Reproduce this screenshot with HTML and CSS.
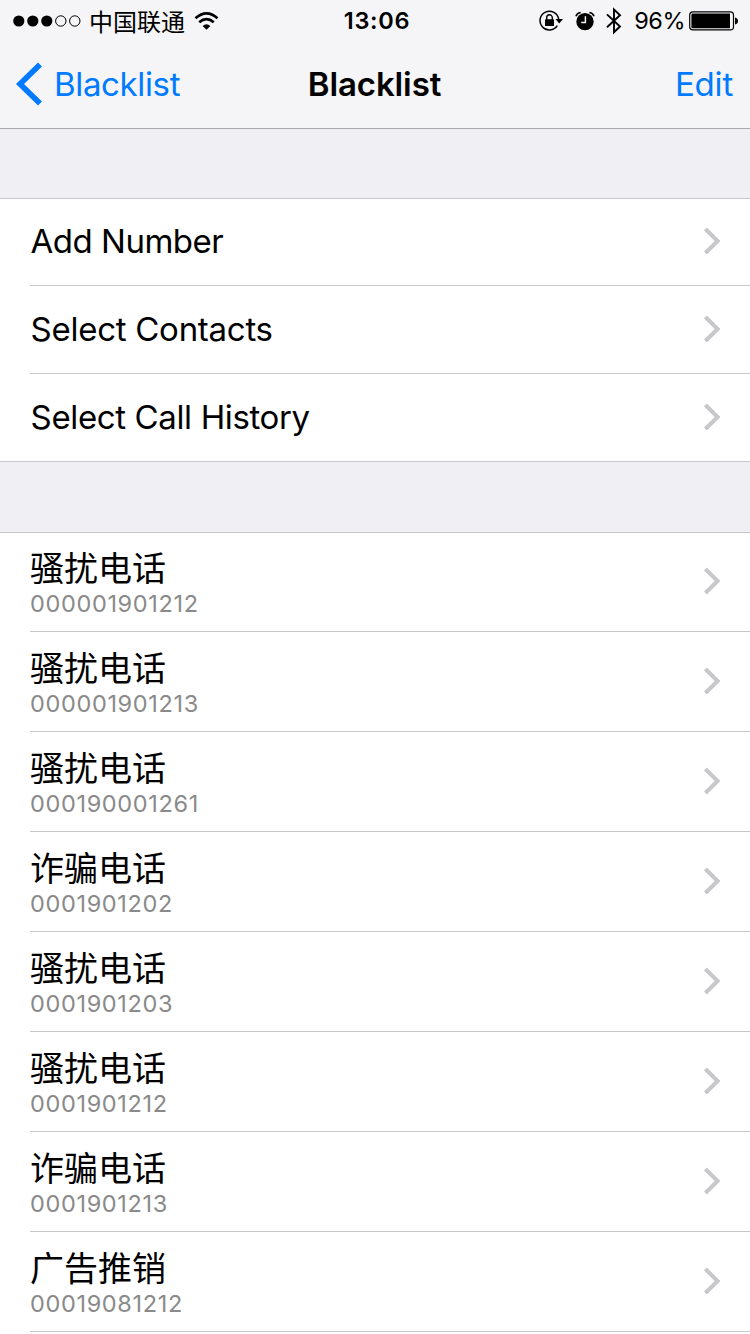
FILE: index.html
```html
<!DOCTYPE html>
<html lang="en">
<head>
<meta charset="utf-8">
<title>Blacklist</title>
<link rel="stylesheet" href="styles.css">
</head>
<body>
<svg class="defs" width="0" height="0" aria-hidden="true">
  <symbol id="chevron" viewBox="0 0 18 28"><path d="M2.4 2 14.6 14 2.4 26" fill="none" stroke="#c7c7cc" stroke-width="4"/></symbol>
</svg>
<header class="topbar">
  <div class="status">
    <div class="status-left">
      <svg class="signal" width="68" height="12" viewBox="0 0 68 12">
        <circle cx="5.8" cy="6" r="5.6"/><circle cx="19.8" cy="6" r="5.6"/><circle cx="33.8" cy="6" r="5.6"/>
        <circle cx="47.8" cy="6" r="5.2" fill="none" stroke="#000"/><circle cx="61.8" cy="6" r="5.2" fill="none" stroke="#000"/>
      </svg>
      <span class="carrier">中国联通</span>
      <svg class="wifi" width="25" height="18" viewBox="0 0 26 19" fill="none" stroke="#000" stroke-width="2.8">
        <path d="M1.4 6.7Q13-3.7 24.6 6.7"/><path d="M5.3 10.8Q13 4.2 20.7 10.8"/>
        <path d="M8.9 14.7Q13 11 17.1 14.7L13 18.7Z" fill="#000" stroke="none"/>
      </svg>
    </div>
    <span class="time">13:06</span>
    <div class="status-right">
      <svg width="24" height="22" viewBox="0 0 24 22">
        <path d="M18.3 15.7A9.4 9.4 0 1 1 19.7 9.2" fill="none" stroke="#000" stroke-width="1.5"/>
        <path d="M16.5 9H24L20.2 13.4Z"/><rect x="6" y="9.2" width="9" height="6.8" rx=".6"/>
        <path d="M7.7 10V7.6a2.8 2.8 0 0 1 5.6 0V10" fill="none" stroke="#000" stroke-width="1.4"/>
      </svg>
      <svg class="alarm" width="20" height="20" viewBox="0 0 20 20">
        <circle cx="10" cy="10.6" r="8.7"/><path d="M10.4 5.3V11.4H6.2" fill="none" stroke="#f5f5f7" stroke-width="1.5"/>
        <path d="M1 5.2Q1.8 2.2 5.6 1.5M19 5.2Q18.2 2.2 14.4 1.5" fill="none" stroke="#000" stroke-width="1.6"/>
      </svg>
      <svg class="bluetooth" width="16" height="28" viewBox="0 0 16 28"><path d="M1 7.4 14 19.5 8 25.2V2.4L14 8.3 1 20.2" fill="none" stroke="#000" stroke-width="1.9"/></svg>
      <span class="percent">96%</span>
      <svg class="battery" width="50" height="20" viewBox="0 0 50 20">
        <rect x=".7" y=".9" width="43.8" height="18" rx="3.2" fill="none" stroke="#000" stroke-width="1.2"/>
        <path d="M3.7 2.6H41V17.2H3.7Q2.4 17.2 2.4 15.9V3.9Q2.4 2.6 3.7 2.6Z"/><path d="M46 6.4Q49 7.2 49 9.9T46 13.4Z"/>
      </svg>
    </div>
  </div>
  <nav class="nav">
    <a class="back"><svg width="28" height="44" viewBox="0 0 28 44"><path d="M25 2.6 5 22 25 41.4" fill="none" stroke="#007aff" stroke-width="5.6"/></svg><span class="nav-label">Blacklist</span></a>
    <h1 class="title">Blacklist</h1>
    <a class="edit">Edit</a>
  </nav>
</header>
<main>
  <ul class="group actions">
    <li class="cell"><div class="row"><span class="action add">Add Number</span><svg class="chevron"><use href="#chevron"/></svg></div></li>
    <li class="cell"><div class="row"><span class="action contacts">Select Contacts</span><svg class="chevron"><use href="#chevron"/></svg></div></li>
    <li class="cell"><div class="row"><span class="action history">Select Call History</span><svg class="chevron"><use href="#chevron"/></svg></div></li>
  </ul>
  <ul class="group entries">
    <li class="cell"><div class="row"><div class="entry"><p class="name">骚扰电话</p><p class="number">000001901212</p></div><svg class="chevron"><use href="#chevron"/></svg></div></li>
    <li class="cell"><div class="row"><div class="entry"><p class="name">骚扰电话</p><p class="number">000001901213</p></div><svg class="chevron"><use href="#chevron"/></svg></div></li>
    <li class="cell"><div class="row"><div class="entry"><p class="name">骚扰电话</p><p class="number">000190001261</p></div><svg class="chevron"><use href="#chevron"/></svg></div></li>
    <li class="cell"><div class="row"><div class="entry"><p class="name">诈骗电话</p><p class="number">0001901202</p></div><svg class="chevron"><use href="#chevron"/></svg></div></li>
    <li class="cell"><div class="row"><div class="entry"><p class="name">骚扰电话</p><p class="number">0001901203</p></div><svg class="chevron"><use href="#chevron"/></svg></div></li>
    <li class="cell"><div class="row"><div class="entry"><p class="name">骚扰电话</p><p class="number">0001901212</p></div><svg class="chevron"><use href="#chevron"/></svg></div></li>
    <li class="cell"><div class="row"><div class="entry"><p class="name">诈骗电话</p><p class="number">0001901213</p></div><svg class="chevron"><use href="#chevron"/></svg></div></li>
    <li class="cell"><div class="row"><div class="entry"><p class="name">广告推销</p><p class="number">00019081212</p></div><svg class="chevron"><use href="#chevron"/></svg></div></li>
    <li class="cell next"></li>
  </ul>
</main>
</body>
</html>
```

FILE: styles.css
```css
* { box-sizing: border-box; margin: 0; padding: 0; }
body { width: 750px; height: 1334px; overflow: hidden; background: #efeff4; color: #000; font-family: Inter, "Noto Sans CJK SC", sans-serif; }
.defs { display: block; height: 0; }
.topbar { height: 129px; background: #f5f5f7; border-bottom: 1px solid #a7a7aa; }
.status { display: grid; grid-template-columns: 1fr auto 1fr; height: 40px; padding: 0 11px 0 13px; align-items: center; }
.status-left, .status-right { display: flex; align-items: center; }
.status-right { justify-content: flex-end; }
.carrier { margin-left: 8px; font: 24px/40px "Noto Sans CJK SC", sans-serif; }
.wifi { margin-left: 9px; }
.time { padding: 1px 0 0 2px; font-size: 23.5px; font-weight: 600; line-height: 40px; letter-spacing: .7px; }
.alarm { margin-left: 12px; }
.bluetooth { margin-left: 11px; }
.percent { margin-left: 12px; padding-top: 1px; font-size: 23.5px; line-height: 40px; letter-spacing: -.5px; }
.battery { margin-left: 4px; }
.nav { display: grid; grid-template-columns: 1fr auto 1fr; height: 88px; padding: 0 17px 0 15px; align-items: center; color: #007aff; font-size: 33px; line-height: 44px; }
.back { display: flex; align-items: center; gap: 11px; letter-spacing: -.35px; }
.title { padding-left: 1px; color: #000; font-size: 33px; font-weight: 600; letter-spacing: -.1px; }
.edit { justify-self: end; letter-spacing: -.2px; }
.group { list-style: none; background: #fff; border-top: 1px solid #c8c7cc; }
.actions { margin-top: 69px; border-bottom: 1px solid #c8c7cc; }
.entries { margin-top: 70px; }
.cell { padding-left: 30px; }
.row { display: flex; align-items: center; justify-content: space-between; height: 88px; padding: 0 29px 2px 0; border-bottom: 1px solid #c8c7cc; }
.actions .cell:first-child .row, .actions .cell:last-child .row { height: 87px; }
.actions .cell:last-child .row { border-bottom: 0; }
.action { padding-left: .6px; font-size: 33px; line-height: 44px; }
.add { letter-spacing: -.5px; }
.contacts { letter-spacing: -.27px; }
.history { letter-spacing: -.37px; }
.entries .row { height: 100px; }
.entries .cell:first-child .row { height: 99px; }
.entry { align-self: flex-end; padding-bottom: 10px; }
.name { font: 34px/45px "Noto Sans CJK SC", sans-serif; }
.number { color: #8a8a8a; font-size: 23.5px; line-height: 30px; letter-spacing: .65px; }
.chevron { width: 18px; height: 28px; flex: none; }
.next { height: 2px; }
```
